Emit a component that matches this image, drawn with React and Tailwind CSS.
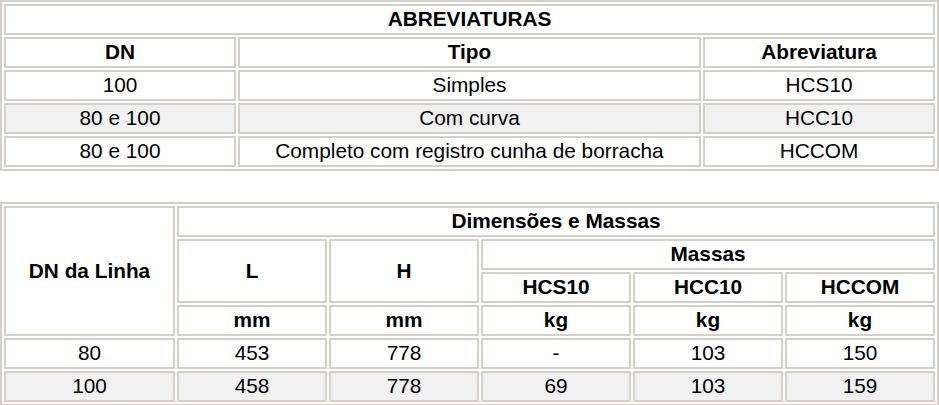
// App.jsx
const cell = "border-2 border-[#d4d0c8] p-0 pb-[2px] text-center leading-[25px] h-[31px]";
const head = `${cell} font-bold`;

const abbrevRows = [
  { dn: "100", tipo: "Simples", abrev: "HCS10" },
  { dn: "80 e 100", tipo: "Com curva", abrev: "HCC10", alt: true },
  { dn: "80 e 100", tipo: "Completo com registro cunha de borracha", abrev: "HCCOM" },
];

const massRows = [
  { dn: "80", l: "453", h: "778", a: "-", b: "103", c: "150" },
  { dn: "100", l: "458", h: "778", a: "69", b: "103", c: "159", alt: true },
];

const App = () => {
  return (
    <div className="w-[939px] bg-white text-black text-[20.8px] font-['Liberation_Sans',Arial,sans-serif]">
      {/* Abreviaturas */}
      <table className="w-full table-fixed border-separate border-spacing-0.5 border-2 border-[#d4d0c8]">
        <colgroup>
          <col className="w-[232px]" />
          <col className="w-[463px]" />
          <col className="w-[232px]" />
        </colgroup>
        <tbody>
          <tr>
            <td colSpan={3} className={head}>ABREVIATURAS</td>
          </tr>
          <tr>
            <td className={head}>DN</td>
            <td className={head}>Tipo</td>
            <td className={head}>Abreviatura</td>
          </tr>
          {abbrevRows.map((r, i) => (
            <tr key={i} className={r.alt ? "bg-[#f1f1f1]" : ""}>
              <td className={cell}>{r.dn}</td>
              <td className={cell}>{r.tipo}</td>
              <td className={cell}>{r.abrev}</td>
            </tr>
          ))}
        </tbody>
      </table>

      {/* Dimensões e Massas */}
      <table className="mt-[31px] w-full table-fixed border-separate border-spacing-0.5 border-2 border-[#d4d0c8]">
        <colgroup>
          <col className="w-[171px]" />
          <col className="w-[150px]" />
          <col className="w-[150px]" />
          <col className="w-[150px]" />
          <col className="w-[150px]" />
          <col className="w-[150px]" />
        </colgroup>
        <tbody>
          <tr>
            <td rowSpan={4} className={head}>DN da Linha</td>
            <td colSpan={5} className={head}>Dimensões e Massas</td>
          </tr>
          <tr>
            <td rowSpan={2} className={head}>L</td>
            <td rowSpan={2} className={head}>H</td>
            <td colSpan={3} className={head}>Massas</td>
          </tr>
          <tr>
            <td className={head}>HCS10</td>
            <td className={head}>HCC10</td>
            <td className={head}>HCCOM</td>
          </tr>
          <tr>
            <td className={head}>mm</td>
            <td className={head}>mm</td>
            <td className={head}>kg</td>
            <td className={head}>kg</td>
            <td className={head}>kg</td>
          </tr>
          {massRows.map((r, i) => (
            <tr key={i} className={r.alt ? "bg-[#f1f1f1]" : ""}>
              <td className={cell}>{r.dn}</td>
              <td className={cell}>{r.l}</td>
              <td className={cell}>{r.h}</td>
              <td className={cell}>{r.a}</td>
              <td className={cell}>{r.b}</td>
              <td className={cell}>{r.c}</td>
            </tr>
          ))}
        </tbody>
      </table>
    </div>
  );
};

export default App;
